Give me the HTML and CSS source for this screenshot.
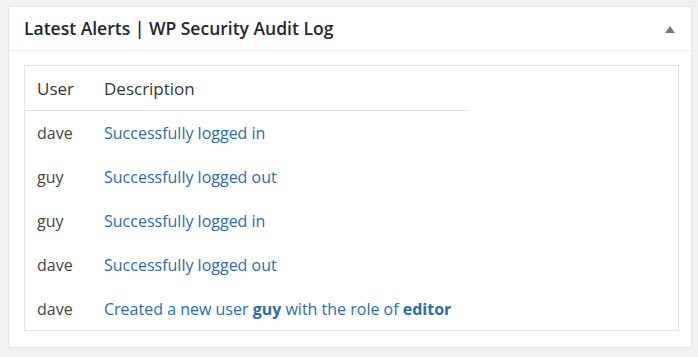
FILE: index.html
```html
<!DOCTYPE html>
<html>
<head>
<meta charset="utf-8">
<link rel="stylesheet" href="styles.css">
</head>
<body>
<div class="postbox">
  <div class="postbox-header">
    <h2 class="postbox-title">Latest Alerts | WP Security Audit Log</h2>
    <span class="toggle-arrow"></span>
  </div>
  <div class="postbox-inside">
    <div class="alerts-frame">
      <table class="alerts">
        <thead>
          <tr><th class="col-user">User</th><th class="col-desc">Description</th></tr>
        </thead>
        <tbody>
          <tr><td>dave</td><td><a href="#">Successfully logged in</a></td></tr>
          <tr><td>guy</td><td><a href="#">Successfully logged out</a></td></tr>
          <tr><td>guy</td><td><a href="#">Successfully logged in</a></td></tr>
          <tr><td>dave</td><td><a href="#">Successfully logged out</a></td></tr>
          <tr><td>dave</td><td><a href="#">Created a new user <strong>guy</strong> with the role of <strong>editor</strong></a></td></tr>
        </tbody>
      </table>
    </div>
  </div>
</div>
</body>
</html>
```
FILE: styles.css
```css
html, body {
  margin: 0;
  padding: 0;
  background: #f1f1f1;
}
body {
  padding: 6px 6px 0 8px;
  font-family: "Open Sans", "Liberation Sans", sans-serif;
  font-size: 16px;
  color: #32373c;
}
.postbox {
  background: #fff;
  border: 1px solid #e5e5e5;
  box-shadow: 0 1px 1px rgba(0,0,0,0.04);
  height: 340px;
  box-sizing: content-box;
}
.postbox-header {
  display: flex;
  align-items: center;
  justify-content: space-between;
  height: 43px;
  border-bottom: 1px solid #eee;
  padding: 0 16px 0 15px;
}
.postbox-title {
  margin: 0;
  font-size: 17.5px;
  font-weight: 600;
  color: #23282d;
  line-height: 1.4;
}
.toggle-arrow {
  width: 0;
  height: 0;
  border-left: 5px solid transparent;
  border-right: 5px solid transparent;
  border-bottom: 7px solid #72777c;
  margin-top: 2px;
}
.postbox-inside {
  padding: 14px 12px 15px 15px;
}
.alerts-frame {
  border: 1px solid #e5e5e5;
  height: 264px;
}
.alerts {
  border-collapse: collapse;
  width: 442px;
}
.alerts th, .alerts td {
  text-align: left;
  font-weight: 400;
  height: 44px;
  padding: 0 0 0 12px;
  vertical-align: middle;
  white-space: nowrap;
}
.alerts thead th {
  color: #32373c;
  font-size: 17px;
  border-bottom: 1px solid #e1e1e1;
}
.alerts .col-user {
  width: 55px;
}
.alerts td {
  color: #444;
}
.alerts a {
  color: #2e6ca4;
  text-decoration: none;
}
.alerts a strong {
  font-weight: 700;
}
```
